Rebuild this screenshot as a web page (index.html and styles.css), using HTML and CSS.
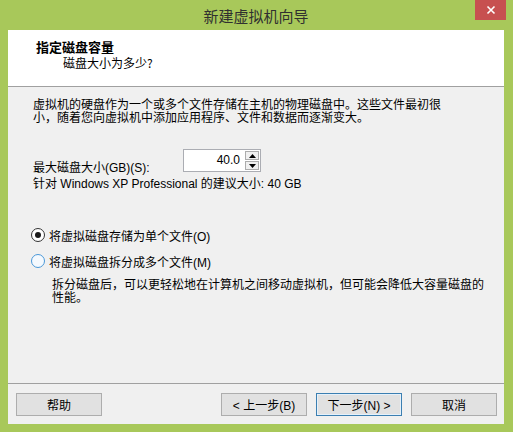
FILE: index.html
```html
<!DOCTYPE html>
<html lang="zh-CN">
<head>
<meta charset="utf-8">
<title>新建虚拟机向导</title>
<link rel="stylesheet" href="styles.css">
</head>
<body>
<div class="window">
  <div class="titlebar">
    <span class="title">新建虚拟机向导</span>
    <button class="close" aria-label="关闭">
      <svg width="10" height="10" viewBox="0 0 10 10"><path d="M1.5 1.5 L8.5 8.5 M8.5 1.5 L1.5 8.5" stroke="#fff" stroke-width="1.6" fill="none"/></svg>
    </button>
  </div>
  <div class="client">
    <div class="header">
      <div class="h-title">指定磁盘容量</div>
      <div class="h-sub">磁盘大小为多少?</div>
    </div>
    <div class="body">
      <p class="intro">虚拟机的硬盘作为一个或多个文件存储在主机的物理磁盘中。这些文件最初很<br>小，随着您向虚拟机中添加应用程序、文件和数据而逐渐变大。</p>
      <div class="size-row">
        <span class="size-label">最大磁盘大小(GB)(S):</span>
        <div class="spin">
          <span class="spin-value">40.0</span>
          <div class="spin-btns">
            <span class="spin-btn"><svg width="7" height="4" viewBox="0 0 7 4"><path d="M3.5 0 L7 4 L0 4 Z" fill="#000"/></svg></span>
            <span class="spin-btn"><svg width="7" height="4" viewBox="0 0 7 4"><path d="M0 0 L7 0 L3.5 4 Z" fill="#000"/></svg></span>
          </div>
        </div>
      </div>
      <p class="hint">针对 Windows XP Professional 的建议大小: 40 GB</p>
      <label class="radio-row first"><span class="radio checked"></span>将虚拟磁盘存储为单个文件(O)</label>
      <label class="radio-row second"><span class="radio hover"></span>将虚拟磁盘拆分成多个文件(M)</label>
      <p class="desc">拆分磁盘后，可以更轻松地在计算机之间移动虚拟机，但可能会降低大容量磁盘的<br>性能。</p>
    </div>
    <div class="footer">
      <button class="btn">帮助</button>
      <div class="spacer"></div>
      <button class="btn">&lt; 上一步(B)</button>
      <button class="btn default">下一步(N) &gt;</button>
      <button class="btn">取消</button>
    </div>
  </div>
</div>
</body>
</html>
```

FILE: styles.css
```css
* { box-sizing: border-box; }
html, body { margin: 0; padding: 0; }
body {
  width: 513px;
  height: 432px;
  overflow: hidden;
  font-family: "Liberation Sans", "Noto Sans CJK SC", sans-serif;
  font-size: 12px;
  color: #000;
}
.window {
  width: 513px;
  height: 432px;
  background: #a8c85a;
  padding: 0 9px 8px 8px;
  display: flex;
  flex-direction: column;
}
.titlebar {
  height: 30px;
  position: relative;
  display: flex;
  align-items: center;
  justify-content: center;
}
.title {
  font-family: "Noto Sans CJK SC", sans-serif;
  font-size: 15px;
  color: #303030;
  margin-top: 1px;
}
.close {
  position: absolute;
  right: -2px;
  top: 0;
  width: 31px;
  height: 20px;
  border: 0;
  padding: 0;
  background: #c75050;
  display: flex;
  align-items: center;
  justify-content: center;
}
.client {
  flex: 1;
  display: flex;
  flex-direction: column;
  background: #f0f0f0;
}
.header {
  height: 57px;
  background: #fff;
  border-bottom: 1px solid #a0a0a0;
  padding: 9px 0 0 28px;
}
.h-title {
  font-family: "Noto Sans CJK SC", sans-serif;
  font-weight: bold;
  font-size: 13px;
  line-height: 16px;
}
.h-sub {
  font-family: "Noto Sans CJK SC", sans-serif;
  line-height: 16px;
  padding-left: 27px;
}
.body {
  flex: 1;
  padding: 12px 20px 0 25px;
  border-bottom: 1px solid #a0a0a0;
}
p { margin: 0; }
.intro { line-height: 13px; }
.size-row {
  margin-top: 24px;
  display: flex;
  align-items: flex-end;
}
.size-label {
  width: 150px;
  line-height: 13px;
  margin-bottom: -3px;
}
.spin {
  display: flex;
  height: 23px;
  width: 78px;
  border: 1px solid #abadb3;
  background: #fff;
}
.spin-value {
  flex: 1;
  text-align: right;
  padding-right: 4px;
  line-height: 21px;
}
.spin-btns {
  width: 16px;
  display: flex;
  flex-direction: column;
  gap: 1px;
  padding: 1px;
}
.spin-btn {
  flex: 1;
  border: 1px solid #acacac;
  background: #f0f0f0;
  display: flex;
  align-items: center;
  justify-content: center;
}
.spin-btn svg { display: block; }
.hint {
  margin-top: 6px;
  line-height: 13px;
}
.radio-row {
  display: flex;
  align-items: center;
  height: 16px;
  margin-left: -2px;
  gap: 4px;
}
.radio-row.first { margin-top: 36px; }
.radio-row.second { margin-top: 10px; }
.radio {
  width: 14px;
  height: 14px;
  border-radius: 50%;
  border: 1px solid #333;
  background: #fff;
  position: relative;
}
.radio.checked::after {
  content: "";
  position: absolute;
  left: 3px;
  top: 3px;
  width: 6px;
  height: 6px;
  border-radius: 50%;
  background: #1a1a1a;
}
.radio.hover { border-color: #4a98d8; background: #f4f9fe; }
.desc {
  margin-top: 10px;
  margin-left: 19px;
  line-height: 13px;
}
.footer {
  height: 40px;
  display: flex;
  align-items: flex-start;
  padding: 9px 7px 0 8px;
  gap: 9px;
}
.spacer { flex: 1; }
.btn {
  width: 86px;
  height: 23px;
  border: 1px solid #adadad;
  background: #e1e1e1;
  font-family: "Liberation Sans", "Noto Sans CJK SC", sans-serif;
  font-size: 12px;
  color: #000;
  padding: 0;
}
.btn.default { border-color: #3c7fb1; box-shadow: inset 0 0 0 1px #e5f1fb; }
```
